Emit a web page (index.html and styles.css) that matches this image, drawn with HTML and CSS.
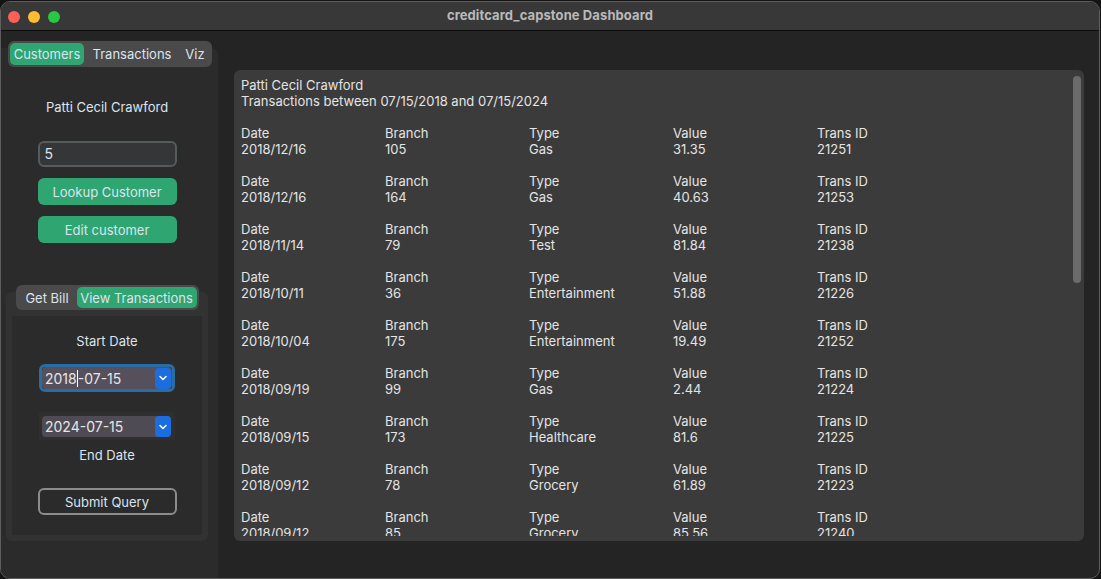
FILE: index.html
```html
<!DOCTYPE html>
<html>
<head>
<meta charset="utf-8">
<link rel="stylesheet" href="styles.css">
</head>
<body>
<div class="window">
  <div class="titlebar">
    <div class="lights">
      <span class="light red"></span>
      <span class="light yellow"></span>
      <span class="light green"></span>
    </div>
    <div class="title">creditcard_capstone Dashboard</div>
  </div>
  <div class="content">
    <div class="sidebar">
      <div class="seg seg-main">
        <div class="segbtn active w-cust">Customers</div>
        <div class="segbtn w-trans">Transactions</div>
        <div class="segbtn w-viz">Viz</div>
      </div>
      <div class="tabframe">
        <div class="name">Patti Cecil Crawford</div>
        <div class="entry">5</div>
        <div class="btn green first">Lookup Customer</div>
        <div class="btn green">Edit customer</div>

        <div class="subtabs">
          <div class="seg seg-sub">
            <div class="segbtn w-bill">Get Bill</div>
            <div class="segbtn active w-view">View Transactions</div>
          </div>
          <div class="subframe">
            <div class="subinner">
              <div class="label start">Start Date</div>
              <div class="date focused">
                <div class="date-inner">
                  <span class="date-text">2018<span class="caret"></span>-07-15</span>
                  <span class="drop"><svg width="8" height="6" viewBox="0 0 8 6"><path d="M1 1.5 L4 4.5 L7 1.5" fill="none" stroke="#fff" stroke-width="1.5" stroke-linecap="round" stroke-linejoin="round"/></svg></span>
                </div>
              </div>
              <div class="date plain">
                <div class="date-inner">
                  <span class="date-text">2024-07-15</span>
                  <span class="drop"><svg width="8" height="6" viewBox="0 0 8 6"><path d="M1 1.5 L4 4.5 L7 1.5" fill="none" stroke="#fff" stroke-width="1.5" stroke-linecap="round" stroke-linejoin="round"/></svg></span>
                </div>
              </div>
              <div class="label end">End Date</div>
              <div class="btn outline">Submit Query</div>
            </div>
          </div>
        </div>
      </div>
    </div>
    <div class="main">
      <div class="textbox">
        <div class="scroll">
          <div class="line">Patti Cecil Crawford</div>
          <div class="line">Transactions between 07/15/2018 and 07/15/2024</div>
          <div class="line blank"></div>

          <div class="rec"><span>Date</span><span>Branch</span><span>Type</span><span>Value</span><span>Trans ID</span>
            <span>2018/12/16</span><span>105</span><span>Gas</span><span>31.35</span><span>21251</span></div>
          <div class="rec"><span>Date</span><span>Branch</span><span>Type</span><span>Value</span><span>Trans ID</span>
            <span>2018/12/16</span><span>164</span><span>Gas</span><span>40.63</span><span>21253</span></div>
          <div class="rec"><span>Date</span><span>Branch</span><span>Type</span><span>Value</span><span>Trans ID</span>
            <span>2018/11/14</span><span>79</span><span>Test</span><span>81.84</span><span>21238</span></div>
          <div class="rec"><span>Date</span><span>Branch</span><span>Type</span><span>Value</span><span>Trans ID</span>
            <span>2018/10/11</span><span>36</span><span>Entertainment</span><span>51.88</span><span>21226</span></div>
          <div class="rec"><span>Date</span><span>Branch</span><span>Type</span><span>Value</span><span>Trans ID</span>
            <span>2018/10/04</span><span>175</span><span>Entertainment</span><span>19.49</span><span>21252</span></div>
          <div class="rec"><span>Date</span><span>Branch</span><span>Type</span><span>Value</span><span>Trans ID</span>
            <span>2018/09/19</span><span>99</span><span>Gas</span><span>2.44</span><span>21224</span></div>
          <div class="rec"><span>Date</span><span>Branch</span><span>Type</span><span>Value</span><span>Trans ID</span>
            <span>2018/09/15</span><span>173</span><span>Healthcare</span><span>81.6</span><span>21225</span></div>
          <div class="rec"><span>Date</span><span>Branch</span><span>Type</span><span>Value</span><span>Trans ID</span>
            <span>2018/09/12</span><span>78</span><span>Grocery</span><span>61.89</span><span>21223</span></div>
          <div class="rec"><span>Date</span><span>Branch</span><span>Type</span><span>Value</span><span>Trans ID</span>
            <span>2018/09/12</span><span>85</span><span>Grocery</span><span>85.56</span><span>21240</span></div>
        </div>
        <div class="scrollbar"></div>
      </div>
    </div>
  </div>
</div>
</body>
</html>
```

FILE: styles.css
```css
* { box-sizing: border-box; }
html, body { margin: 0; padding: 0; }
body {
  background: #141414;
  width: 1101px;
  height: 579px;
  overflow: hidden;
  font-family: Inter, "Liberation Sans", sans-serif;
  font-size: 13px;
  color: #dce4ee;
}
.window {
  margin-top: 1px;
  width: 1100px;
  height: 578px;
  border: 1px solid #5e5e5e;
  border-radius: 10px;
  overflow: hidden;
  display: flex;
  flex-direction: column;
  background: #242424;
}
.titlebar {
  height: 29px;
  flex: none;
  background: #383838;
  border-bottom: 1px solid #0d0d0d;
  display: flex;
  align-items: center;
  position: relative;
}
.lights {
  display: flex;
  gap: 8px;
  padding-left: 7px;
  padding-top: 1px;
}
.light {
  width: 12px;
  height: 12px;
  border-radius: 50%;
  display: block;
}
.red { background: #fe5f57; }
.yellow { background: #febc2e; }
.green { background: #28c840; }
.title {
  position: absolute;
  left: 0;
  right: 0;
  top: 5px;
  text-align: center;
  font-weight: 700;
  font-size: 13px;
  letter-spacing: 0.1px;
  color: #b9b9b9;
  line-height: 16px;
}
.content {
  flex: 1;
  display: flex;
  min-height: 0;
}
.sidebar {
  width: 217px;
  flex: none;
  display: flex;
  flex-direction: column;
  align-items: center;
  padding-top: 10px;
}
.seg {
  position: relative;
  z-index: 1;
  display: flex;
  background: #4a4a4a;
  border-radius: 6px;
  padding: 2px;
  flex: none;
}
.seg-main { width: 204px; height: 26px; margin-left: 1px; }
.segbtn {
  display: flex;
  align-items: center;
  justify-content: center;
  border-radius: 5px;
  line-height: 16px;
  white-space: nowrap;
  color: #dce4ee;
}
.segbtn.active { background: #2fa572; }
.w-cust { width: 74px; }
.w-trans { width: 96px; }
.w-viz { width: 30px; }
.tabframe {
  align-self: stretch;
  flex: 1;
  margin-top: -19px;
  padding-top: 19px;
  padding-right: 5px;
  background: #2b2b2b;
  border-top-right-radius: 6px;
  display: flex;
  flex-direction: column;
  align-items: center;
}
.name {
  margin-top: 32px;
  line-height: 16px;
}
.entry {
  margin-top: 26px;
  width: 139px;
  height: 26px;
  border: 2px solid #565b5e;
  background: #343638;
  border-radius: 6px;
  padding-left: 5px;
  font-size: 14px;
  line-height: 22px;
}
.btn {
  width: 139px;
  height: 27px;
  border-radius: 6px;
  display: flex;
  align-items: center;
  justify-content: center;
  line-height: 16px;
  margin-top: 11px;
}
.btn.green { background: #2fa572; }
.subtabs {
  margin-top: 42px;
  display: flex;
  flex-direction: column;
  align-items: center;
  width: 202px;
  flex: none;
}
.seg-sub { width: 183px; height: 25px; }
.w-bill { width: 59px; }
.w-view { width: 120px; }
.subframe {
  margin-top: -18px;
  width: 202px;
  height: 249px;
  background: #323232;
  border-radius: 6px;
  padding: 24px 6px 6px;
}
.subinner {
  height: 100%;
  background: #2b2b2b;
  display: flex;
  flex-direction: column;
  align-items: center;
  padding-top: 17px;
}
.label { line-height: 16px; }
.date {
  width: 136px;
  flex: none;
}
.date.focused {
  margin-top: 15px;
  height: 28px;
  border: 3px solid #2a6ca4;
  border-radius: 6px;
}
.date.plain {
  margin-top: 20px;
  height: 28px;
  background: #2f2f2f;
  padding: 4px 4px 3px 3px;
}
.date-inner {
  height: 100%;
  background: #55505b;
  border-radius: 4px;
  display: flex;
  align-items: center;
  justify-content: space-between;
  padding-left: 3px;
  padding-right: 1px;
}
.date.plain .date-inner { background: #4e4b54; padding-right: 0; }
.date-text {
  font-size: 14px;
  line-height: 16px;
  color: #e6e6e6;
  position: relative;
}
.caret {
  display: inline-block;
  width: 1px;
  height: 17px;
  background: #ffffff;
  vertical-align: -3px;
}
.drop {
  width: 16px;
  height: 21px;
  background: #1b6de0;
  border-radius: 4px;
  display: flex;
  align-items: center;
  justify-content: center;
}
.label.end { margin-top: 7px; }
.btn.outline {
  margin-top: 25px;
  border: 2px solid #8c8c8c;
  background: transparent;
}
.main {
  flex: 1;
  padding: 39px 15px 37px 16px;
  display: flex;
}
.textbox {
  flex: 1;
  background: #3b3b3b;
  border-radius: 6px;
  position: relative;
  padding: 7px 7px 5px 7px;
  display: flex;
}
.scroll {
  flex: 1;
  overflow: hidden;
  line-height: 16px;
  color: #e4e4e4;
}
.line { height: 16px; white-space: nowrap; }
.rec {
  display: grid;
  grid-template-columns: repeat(5, 144px);
  grid-auto-rows: 16px;
  margin-bottom: 16px;
  white-space: nowrap;
}
.scrollbar {
  position: absolute;
  right: 3px;
  top: 6px;
  width: 8px;
  height: 207px;
  border-radius: 4px;
  background: #6b6b6b;
}
```
